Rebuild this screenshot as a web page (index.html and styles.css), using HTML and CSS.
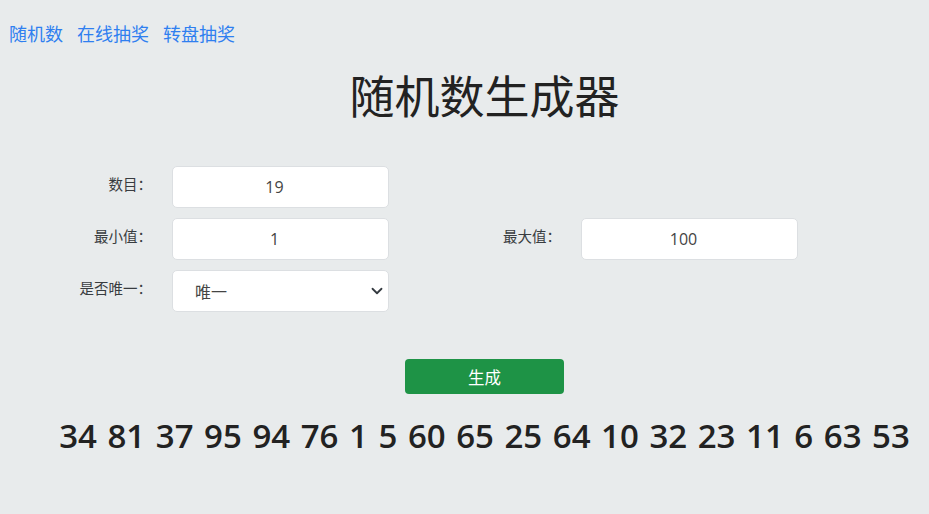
FILE: index.html
```html
<!DOCTYPE html>
<html lang="zh-CN">
<head>
<meta charset="utf-8">
<title>随机数生成器</title>
<link rel="stylesheet" href="styles.css">
</head>
<body>
<nav class="nav">
  <a href="#" class="nav-link">随机数</a>
  <a href="#" class="nav-link">在线抽奖</a>
  <a href="#" class="nav-link">转盘抽奖</a>
</nav>
<main class="main">
  <h1 class="title">随机数生成器</h1>
  <form class="form">
    <label class="label">数目：</label>
    <input class="field" type="text" value="19">
    <span class="empty"></span>
    <span class="empty"></span>

    <label class="label">最小值：</label>
    <input class="field" type="text" value="1">
    <label class="label label-wide">最大值：</label>
    <input class="field" type="text" value="100">

    <label class="label">是否唯一：</label>
    <div class="select-wrap">
      <select class="select">
        <option>唯一</option>
        <option>不唯一</option>
      </select>
      <svg class="chevron" width="12" height="12" viewBox="0 0 16 16"><path d="M2 5l6 6 6-6" fill="none" stroke="#343a40" stroke-width="2.4" stroke-linecap="round" stroke-linejoin="round"/></svg>
    </div>
  </form>
  <div class="actions">
    <button class="btn" type="button">生成</button>
  </div>
  <div class="result">34 81 37 95 94 76 1 5 60 65 25 64 10 32 23 11 6 63 53</div>
</main>
</body>
</html>
```

FILE: styles.css
```css
html, body {
  margin: 0;
  padding: 0;
}
body {
  background: #e8ebec;
  font-family: "Noto Sans CJK SC", "Noto Sans", sans-serif;
  color: #212529;
  width: 929px;
  height: 514px;
  overflow: hidden;
}
.nav {
  display: flex;
  gap: 14px;
  padding: 20px 0 0 9px;
  height: 26px;
}
.nav-link {
  color: #2f7ff0;
  text-decoration: none;
  font-size: 18px;
  line-height: 26px;
}
.main {
  margin-left: 40px;
}
.title {
  margin: 21px 0 0;
  text-align: center;
  font-size: 45px;
  font-weight: 400;
  line-height: 55px;
  color: #222;
}
.form {
  margin-top: 44px;
  display: grid;
  grid-template-columns: 132px 217px 192px 217px;
  grid-auto-rows: 42px;
  row-gap: 10px;
}
.label {
  text-align: right;
  padding: 8px 20px 0 0;
  font-size: 14.5px;
  line-height: 20px;
  color: #383c40;
}
.label-wide {
  padding-right: 20px;
}
.field, .select {
  box-sizing: border-box;
  width: 217px;
  height: 42px;
  border: 1px solid #dcdfe2;
  border-radius: 5px;
  background: #fff;
  font-family: "Open Sans", "Noto Sans CJK SC", sans-serif;
  font-size: 16px;
  color: #444;
  outline: none;
  margin: 0;
}
.field {
  text-align: center;
  padding: 0 24px 0 12px;
}
.select-wrap {
  position: relative;
  width: 217px;
  height: 42px;
}
.select {
  -webkit-appearance: none;
  appearance: none;
  padding: 0 30px 0 22px;
  font-family: "Noto Sans CJK SC", sans-serif;
}
.chevron {
  position: absolute;
  right: 6px;
  top: 15px;
  pointer-events: none;
}
.actions {
  margin-top: 47px;
  display: flex;
  justify-content: center;
}
.btn {
  width: 159px;
  height: 35px;
  border: none;
  border-radius: 4px;
  background: #1e9346;
  color: #fff;
  font-family: "Noto Sans CJK SC", sans-serif;
  font-size: 16.5px;
  padding: 0;
}
.result {
  margin-top: 19px;
  text-align: center;
  font-family: "Open Sans", "Noto Sans", sans-serif;
  font-weight: 600;
  font-size: 33px;
  line-height: 45px;
  word-spacing: 2px;
  color: #222;
  white-space: nowrap;
}
```
